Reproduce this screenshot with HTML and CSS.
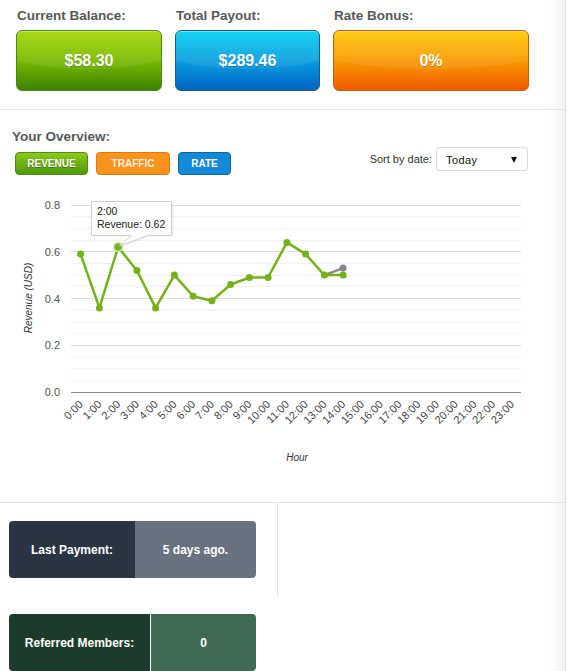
FILE: index.html
```html
<!DOCTYPE html>
<html lang="en">
<head>
    <meta charset="UTF-8">
    <meta name="viewport" content="width=device-width, initial-scale=1.0">
    <title>Account Overview</title>
    <link rel="stylesheet" href="styles.css">
</head>
<body>

<div class="panel">

    <!-- Balance boxes -->
    <div class="stats">
        <div class="stat stat-balance">
            <div class="stat-label">Current Balance:</div>
            <div class="stat-box green"><span class="stat-value">$58.30</span></div>
        </div>
        <div class="stat stat-payout">
            <div class="stat-label">Total Payout:</div>
            <div class="stat-box blue"><span class="stat-value">$289.46</span></div>
        </div>
        <div class="stat stat-bonus">
            <div class="stat-label">Rate Bonus:</div>
            <div class="stat-box orange"><span class="stat-value">0%</span></div>
        </div>
    </div>

    <!-- Overview chart -->
    <div class="overview">
        <h2>Your Overview:</h2>
        <div class="controls">
            <div class="tabs">
                <span class="tab tab-revenue">REVENUE</span>
                <span class="tab tab-traffic">TRAFFIC</span>
                <span class="tab tab-rate">RATE</span>
            </div>
            <div class="sort">
                <span class="sort-label">Sort by date:</span>
                <div class="select">Today <span class="caret"></span></div>
            </div>
        </div>

        <svg class="chart" width="565" height="322" viewBox="0 180 565 322">
            <g class="grid-minor">
                <line x1="71" x2="521" y1="380.5" y2="380.5"/>
                <line x1="71" x2="521" y1="368.5" y2="368.5"/>
                <line x1="71" x2="521" y1="356.5" y2="356.5"/>
                <line x1="71" x2="521" y1="333.5" y2="333.5"/>
                <line x1="71" x2="521" y1="321.5" y2="321.5"/>
                <line x1="71" x2="521" y1="310.5" y2="310.5"/>
                <line x1="71" x2="521" y1="286.5" y2="286.5"/>
                <line x1="71" x2="521" y1="275.5" y2="275.5"/>
                <line x1="71" x2="521" y1="263.5" y2="263.5"/>
                <line x1="71" x2="521" y1="240.5" y2="240.5"/>
                <line x1="71" x2="521" y1="228.5" y2="228.5"/>
                <line x1="71" x2="521" y1="216.5" y2="216.5"/>
            </g>
            <g class="grid-major">
                <line x1="71" x2="521" y1="345.5" y2="345.5"/>
                <line x1="71" x2="521" y1="298.5" y2="298.5"/>
                <line x1="71" x2="521" y1="251.5" y2="251.5"/>
                <line x1="71" x2="521" y1="205.5" y2="205.5"/>
            </g>
            <line class="axis" x1="71" x2="521" y1="392.5" y2="392.5"/>

            <g class="y-labels">
                <text x="60" y="209">0.8</text>
                <text x="60" y="256">0.6</text>
                <text x="60" y="303">0.4</text>
                <text x="60" y="349">0.2</text>
                <text x="60" y="396">0.0</text>
            </g>
            <text class="axis-title" x="32" y="298" transform="rotate(-90 32 298)">Revenue (USD)</text>

            <g class="x-labels">
                <text x="83.6" y="405" transform="rotate(-45 83.6 405)">0:00</text>
                <text x="102.4" y="405" transform="rotate(-45 102.4 405)">1:00</text>
                <text x="121.1" y="405" transform="rotate(-45 121.1 405)">2:00</text>
                <text x="139.9" y="405" transform="rotate(-45 139.9 405)">3:00</text>
                <text x="158.6" y="405" transform="rotate(-45 158.6 405)">4:00</text>
                <text x="177.4" y="405" transform="rotate(-45 177.4 405)">5:00</text>
                <text x="196.1" y="405" transform="rotate(-45 196.1 405)">6:00</text>
                <text x="214.9" y="405" transform="rotate(-45 214.9 405)">7:00</text>
                <text x="233.6" y="405" transform="rotate(-45 233.6 405)">8:00</text>
                <text x="252.4" y="405" transform="rotate(-45 252.4 405)">9:00</text>
                <text x="271.1" y="405" transform="rotate(-45 271.1 405)">10:00</text>
                <text x="289.9" y="405" transform="rotate(-45 289.9 405)">11:00</text>
                <text x="308.6" y="405" transform="rotate(-45 308.6 405)">12:00</text>
                <text x="327.4" y="405" transform="rotate(-45 327.4 405)">13:00</text>
                <text x="346.1" y="405" transform="rotate(-45 346.1 405)">14:00</text>
                <text x="364.9" y="405" transform="rotate(-45 364.9 405)">15:00</text>
                <text x="383.6" y="405" transform="rotate(-45 383.6 405)">16:00</text>
                <text x="402.4" y="405" transform="rotate(-45 402.4 405)">17:00</text>
                <text x="421.1" y="405" transform="rotate(-45 421.1 405)">18:00</text>
                <text x="439.9" y="405" transform="rotate(-45 439.9 405)">19:00</text>
                <text x="458.6" y="405" transform="rotate(-45 458.6 405)">20:00</text>
                <text x="477.4" y="405" transform="rotate(-45 477.4 405)">21:00</text>
                <text x="496.1" y="405" transform="rotate(-45 496.1 405)">22:00</text>
                <text x="514.9" y="405" transform="rotate(-45 514.9 405)">23:00</text>
            </g>
            <text class="axis-title" x="297" y="461">Hour</text>

            <!-- previous period -->
            <g class="series-grey">
                <polyline points="324.4,275.1 343.1,268.1"/>
                <circle cx="343.1" cy="268.1" r="3.5"/>
            </g>

            <!-- revenue -->
            <g class="series-green">
                <polyline points="80.6,254.1 99.4,307.9 118.1,247.1 136.9,270.5 155.6,307.9 174.4,275.1 193.1,296.2 211.9,300.8 230.6,284.5 249.4,277.5 268.1,277.5 286.9,242.4 305.6,254.1 324.4,275.1 343.1,275.1"/>
                <circle cx="80.6" cy="254.1" r="3.5"/>
                <circle cx="99.4" cy="307.9" r="3.5"/>
                <circle class="hover-halo" cx="118.1" cy="247.1" r="5"/>
                <circle cx="118.1" cy="247.1" r="3.5"/>
                <circle cx="136.9" cy="270.5" r="3.5"/>
                <circle cx="155.6" cy="307.9" r="3.5"/>
                <circle cx="174.4" cy="275.1" r="3.5"/>
                <circle cx="193.1" cy="296.2" r="3.5"/>
                <circle cx="211.9" cy="300.8" r="3.5"/>
                <circle cx="230.6" cy="284.5" r="3.5"/>
                <circle cx="249.4" cy="277.5" r="3.5"/>
                <circle cx="268.1" cy="277.5" r="3.5"/>
                <circle cx="286.9" cy="242.4" r="3.5"/>
                <circle cx="305.6" cy="254.1" r="3.5"/>
                <circle cx="324.4" cy="275.1" r="3.5"/>
                <circle cx="343.1" cy="275.1" r="3.5"/>
            </g>

            <!-- tooltip -->
            <g class="tooltip">
                <path class="tooltip-shadow" d="M92.5,202.5 H173.5 V236.5 H149.5 L120.5,247.5 L132.5,236.5 H92.5 Z"/>
                <path class="tooltip-box" d="M91.5,201.5 H171.5 V235.5 H147.5 L119.5,246 L131.5,235.5 H91.5 Z"/>
                <text x="97" y="215">2:00</text>
                <text x="97" y="228">Revenue: 0.62</text>
            </g>
        </svg>
    </div>

    <!-- Account details -->
    <div class="payment-row">
        <div class="info info-payment">
            <div class="info-key">Last Payment:</div>
            <div class="info-val">5 days ago.</div>
        </div>
    </div>
    <div class="referral-row">
        <div class="info info-referral">
            <div class="info-key">Referred Members:</div>
            <div class="info-val">0</div>
        </div>
    </div>

</div>

</body>
</html>
```

FILE: styles.css
```css
* {
    box-sizing: border-box;
}
body {
    margin: 0;
    font-family: "Liberation Sans", Arial, sans-serif;
    background-color: #fff;
}
.panel {
    width: 566px;
    height: 671px;
    overflow: hidden;
    border-right: 1px solid #dedede;
    background: linear-gradient(to right, #fff 550px, #f1f1f1 565px);
}

/* balance boxes */
.stats {
    display: flex;
    gap: 13px;
    padding: 8px 0 18px 16px;
    border-bottom: 1px solid #e4e4e4;
}
.stat-label {
    padding-left: 1px;
    margin-bottom: 6px;
    font-size: 13.5px;
    line-height: 16px;
    font-weight: bold;
    color: #585858;
}
.stat-balance { width: 146px; }
.stat-payout { width: 145px; }
.stat-bonus { width: 196px; }
.stat-box {
    position: relative;
    overflow: hidden;
    height: 61px;
    display: flex;
    align-items: center;
    justify-content: center;
    border: 1px solid;
    border-radius: 6px;
    box-shadow: inset 0 1px 0 rgba(255, 255, 255, 0.35);
}
.stat-box::after {
    content: "";
    position: absolute;
    left: -30%;
    right: -30%;
    top: -70%;
    height: 135%;
    border-radius: 50%;
    background: rgba(255, 255, 255, 0.08);
}
.stat-value {
    position: relative;
    z-index: 1;
    color: #fff;
    font-size: 16px;
    font-weight: bold;
    text-shadow: 0 1px 1px rgba(0, 0, 0, 0.2);
}
.green {
    border-color: #4a8a12;
    background: linear-gradient(#a2d600, #78ba00 50%, #3c8300);
}
.blue {
    border-color: #1a5d86;
    background: linear-gradient(#00d0f2, #089fe0 50%, #0062c4);
}
.orange {
    border-color: #c2600c;
    background: linear-gradient(#fdc900, #f89a00 50%, #f05a00);
}

/* overview */
.overview {
    padding-top: 19px;
    border-bottom: 1px solid #e4e4e4;
}
.overview h2 {
    margin: 0;
    padding-left: 12px;
    font-size: 13.5px;
    line-height: 16px;
    color: #585858;
}
.controls {
    display: flex;
    justify-content: space-between;
    align-items: flex-start;
    height: 33px;
    margin-top: 2px;
    padding: 0 37px 0 15px;
}
.tabs {
    display: flex;
    gap: 8px;
    margin-top: 5px;
}
.tab {
    height: 23px;
    display: flex;
    align-items: center;
    justify-content: center;
    border: 1px solid;
    border-radius: 4px;
    font-size: 10px;
    font-weight: bold;
    color: #fff;
}
.tab-revenue {
    width: 73px;
    border-color: #4b8d12;
    background: linear-gradient(#8ac91c, #4e9a06);
    text-shadow: 0 1px 1px rgba(0, 0, 0, 0.35);
}
.tab-traffic {
    width: 74px;
    border-color: #e07a00;
    background: #f8931d;
    color: #ffeedd;
}
.tab-rate {
    width: 53px;
    border-color: #0b64a8;
    background: #1588d8;
}
.sort {
    display: flex;
    align-items: center;
    gap: 4px;
    font-size: 11px;
    color: #333;
}
.select {
    width: 92px;
    height: 24px;
    display: flex;
    align-items: center;
    justify-content: space-between;
    padding: 2px 10px 0 9px;
    border: 1px solid #dcdcdc;
    border-radius: 3px;
    color: #111;
    letter-spacing: 0.4px;
}
.caret {
    width: 0;
    height: 0;
    border-left: 3.5px solid transparent;
    border-right: 3.5px solid transparent;
    border-top: 6px solid #111;
}

/* chart */
.chart {
    display: block;
    font-family: "Liberation Sans", Arial, sans-serif;
}
.grid-minor line {
    stroke: #f0f0f0;
    stroke-width: 1;
}
.grid-major line {
    stroke: #dddddd;
    stroke-width: 1;
}
.axis {
    stroke: #888;
    stroke-width: 1;
}
.y-labels text {
    font-size: 11px;
    fill: #555;
    text-anchor: end;
}
.x-labels text {
    font-size: 11px;
    fill: #444;
    text-anchor: end;
}
.axis-title {
    font-size: 10px;
    font-style: italic;
    fill: #333;
    text-anchor: middle;
}
.series-green polyline,
.series-grey polyline {
    fill: none;
    stroke-width: 2.5;
    stroke-linejoin: round;
}
.series-green polyline {
    stroke: #75b11a;
}
.series-green circle {
    fill: #75b11a;
}
.series-green .hover-halo {
    fill: #c8e0a8;
}
.series-grey polyline {
    stroke: #888;
}
.series-grey circle {
    fill: #888;
}
.tooltip-shadow {
    fill: rgba(0, 0, 0, 0.06);
}
.tooltip-box {
    fill: #fff;
    stroke: #cfcfcf;
    stroke-width: 1;
}
.tooltip text {
    font-size: 10.5px;
    fill: #222;
}

/* account details */
.payment-row {
    width: 278px;
    padding: 18px 0 18px 9px;
    border-right: 1px solid #e4e4e4;
}
.referral-row {
    padding: 18px 0 0 9px;
}
.info {
    width: 247px;
    height: 57px;
    display: flex;
    border-radius: 4px;
    overflow: hidden;
    color: #fff;
    font-size: 12px;
    font-weight: bold;
}
.info-key,
.info-val {
    display: flex;
    align-items: center;
    justify-content: center;
}
.info-val {
    flex: 1;
}
.info-payment .info-key {
    width: 126px;
    background-color: #2b3442;
}
.info-payment .info-val {
    background-color: #69727f;
}
.info-referral .info-key {
    width: 141px;
    background-color: #1d3b2a;
}
.info-referral .info-val {
    border-left: 1px solid #fff;
    background-color: #3e6b52;
}
```
